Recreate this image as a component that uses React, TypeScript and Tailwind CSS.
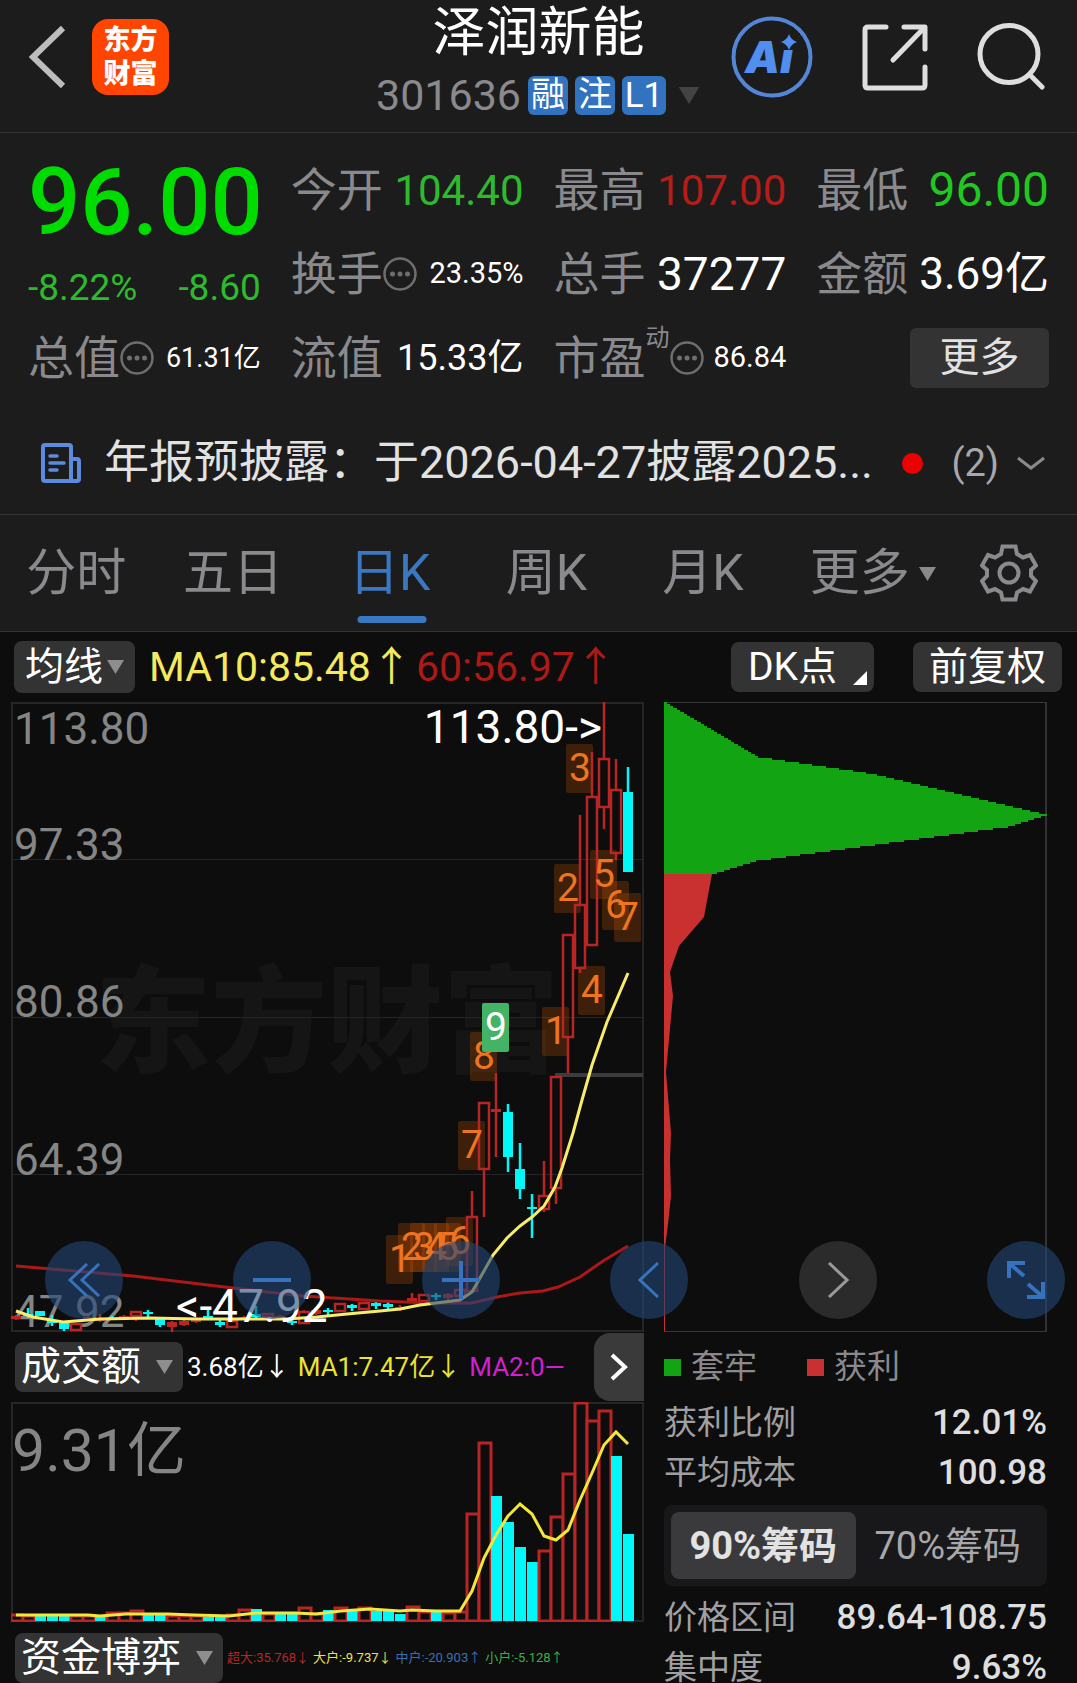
import React from "react";

const UP = "#b92525";
const DOWN = "#00f8f8";
const BG = "#0d0d0d";

const slotX = (i: number) => 16 + i * 12;

type Candle = { up: boolean; high: number; top: number; bottom: number; low: number; solid?: boolean };

const c = (up: boolean, high: number, top: number, bottom: number, low: number, solid = false): Candle => ({
  up,
  high,
  top,
  bottom,
  low,
  solid,
});

const candles: Candle[] = [
  c(true, 1315, 1316, 1319, 1320, true),
  c(false, 1308, 1314, 1316, 1318),
  c(false, 1311, 1311, 1316, 1316),
  c(false, 1315, 1320, 1323, 1326),
  c(false, 1322, 1323, 1329, 1331),
  c(true, 1323, 1324, 1330, 1331),
  c(true, 1316, 1317, 1321, 1321, true),
  c(true, 1314, 1319, 1321, 1322, true),
  c(false, 1316, 1318, 1320, 1320),
  c(true, 1315, 1316, 1318, 1319, true),
  c(true, 1311, 1312, 1316, 1321),
  c(false, 1310, 1312, 1314, 1317),
  c(false, 1317, 1317, 1325, 1327),
  c(true, 1321, 1322, 1327, 1332, true),
  c(true, 1320, 1321, 1325, 1326, true),
  c(true, 1319, 1320, 1322, 1323, true),
  c(false, 1309, 1316, 1318, 1319),
  c(false, 1320, 1322, 1325, 1327),
  c(true, 1320, 1321, 1327, 1328),
  c(true, 1316, 1317, 1319, 1320, true),
  c(false, 1306, 1314, 1317, 1318),
  c(true, 1313, 1314, 1317, 1319),
  c(true, 1315, 1316, 1319, 1320, true),
  c(false, 1319, 1321, 1323, 1325),
  c(true, 1310, 1312, 1323, 1324),
  c(true, 1308, 1310, 1314, 1315, true),
  c(false, 1308, 1310, 1312, 1316),
  c(true, 1303, 1304, 1311, 1312),
  c(false, 1304, 1305, 1308, 1311),
  c(true, 1302, 1303, 1309, 1310),
  c(false, 1302, 1303, 1306, 1309),
  c(false, 1302, 1304, 1307, 1309),
  c(true, 1305, 1307, 1310, 1311, true),
  c(true, 1293, 1298, 1301, 1302, true),
  c(true, 1294, 1295, 1301, 1302),
  c(false, 1293, 1295, 1297, 1300),
  c(true, 1293, 1294, 1298, 1300, true),
  c(true, 1288, 1290, 1296, 1297),
  c(true, 1191, 1217, 1291, 1292),
  c(true, 1102, 1103, 1169, 1217),
  c(true, 1073, 1109, 1112, 1157, true),
  c(false, 1104, 1112, 1157, 1172),
  c(false, 1143, 1169, 1189, 1199),
  c(false, 1194, 1207, 1209, 1238),
  c(true, 1161, 1196, 1209, 1212),
  c(true, 1077, 1077, 1188, 1204),
  c(true, 934, 935, 1037, 1073),
  c(true, 815, 905, 968, 973),
  c(true, 752, 797, 945, 946),
  c(true, 702, 759, 807, 829),
  c(true, 759, 790, 853, 860),
  c(false, 767, 792, 872, 872),
];

const signals: [string, number, number, boolean?][] = [
  ["1", 386, 1235],
  ["2", 398, 1223],
  ["3", 410, 1223],
  ["4", 422, 1223],
  ["5", 434, 1223],
  ["6", 446, 1217],
  ["7", 458, 1121],
  ["8", 470, 1032],
  ["9", 482, 1003, true],
  ["1", 542, 1007],
  ["2", 554, 864],
  ["3", 566, 744],
  ["4", 578, 966],
  ["5", 590, 850],
  ["6", 602, 881],
  ["7", 614, 893],
];

const volumes: [boolean, number][] = [
  [true, 1615], [true, 1616], [false, 1615], [false, 1616], [false, 1616], [true, 1616], [true, 1616],
  [false, 1615], [true, 1613], [true, 1613], [true, 1611], [false, 1614], [false, 1614], [true, 1616],
  [true, 1616], [true, 1616], [false, 1617], [false, 1616], [true, 1615], [true, 1610], [false, 1609],
  [true, 1614], [false, 1613], [false, 1613], [true, 1608], [true, 1614], [false, 1610], [true, 1608],
  [false, 1610], [true, 1608], [false, 1611], [false, 1611], [false, 1614], [true, 1607], [true, 1612],
  [false, 1612], [true, 1613], [true, 1612], [true, 1514], [true, 1443], [false, 1496], [false, 1522],
  [false, 1547], [false, 1562], [true, 1551], [true, 1517], [true, 1474], [true, 1403], [true, 1421],
  [true, 1411], [false, 1456], [false, 1534],
];

const trapped: [number, number][] = [
  [702, 1], [757, 94], [774, 209], [815, 383], [827, 344], [861, 92], [874, 50],
];

function trappedWidth(y: number) {
  for (let i = 1; i < trapped.length; i++) {
    const [y0, w0] = trapped[i - 1];
    const [y1, w1] = trapped[i];
    if (y <= y1) return Math.round(w0 + ((w1 - w0) * (y - y0)) / (y1 - y0));
  }
  return 50;
}

const trappedPath = (() => {
  let d = "M664 702";
  for (let y = 702; y < 874; y += 2) {
    d += `L${664 + trappedWidth(y + 1)} ${y}V${y + 2}`;
  }
  return d + "H664Z";
})();

function Triangle({ className = "" }: { className?: string }) {
  return (
    <svg viewBox="0 0 17 14" className={className} fill="currentColor" aria-hidden="true">
      <path d="M0 0H17L8.5 14Z" />
    </svg>
  );
}

function Dots() {
  return (
    <svg viewBox="0 0 34 34" className="h-[34px] w-[34px] shrink-0 text-[#6e6e70]" fill="currentColor" aria-hidden="true">
      <circle cx="17" cy="17" r="15.5" fill="none" stroke="currentColor" strokeWidth="2.5" />
      <circle cx="9.5" cy="17" r="2.5" />
      <circle cx="17" cy="17" r="2.5" />
      <circle cx="24.5" cy="17" r="2.5" />
    </svg>
  );
}

function Header() {
  return (
    <header className="grid h-[133px] grid-cols-[1fr_auto_1fr] border-b border-[#333]">
      <div className="flex items-start pt-[19px] pl-7">
        <button aria-label="返回" className="flex h-[76px] w-16 items-center">
          <svg viewBox="0 0 38 64" className="h-16 w-[38px]" fill="none" stroke="#bdbdbd" strokeWidth="6">
            <path d="M35 3L5 32L35 61" />
          </svg>
        </button>
        <a href="#" className="flex h-[76px] w-[77px] flex-col items-center justify-center rounded-2xl bg-[#ff4500] text-[27px] leading-[34px] font-black text-white">
          <span>东方</span>
          <span>财富</span>
        </a>
      </div>
      <div className="flex flex-col items-center">
        <h1 className="text-[53px] leading-[66px] text-white">泽润新能</h1>
        <button className="mt-[10px] flex h-[39px] items-center gap-[7px] text-white">
          <span className="text-[43px] leading-[39px] text-[#8a8a8e]">301636</span>
          <span className="h-[39px] w-10 rounded-md bg-[#3273c0] text-[34px] leading-[37px]">融</span>
          <span className="h-[39px] w-10 rounded-md bg-[#3273c0] text-[34px] leading-[37px]">注</span>
          <span className="h-[39px] w-11 rounded-md bg-[#3273c0] text-[35px] leading-[39px]">L1</span>
          <Triangle className="ml-1 h-[17px] w-6 text-[#434343]" />
        </button>
      </div>
      <div className="flex items-start justify-end gap-[49px] pt-4 pr-8">
        <button aria-label="Ai">
          <svg viewBox="0 0 82 82" className="h-[82px] w-[82px]">
            <circle cx="41" cy="41" r="38.5" fill="none" stroke="#5585d6" strokeWidth="4" />
            <text x="38" y="57" textAnchor="middle" fontFamily="Inter, sans-serif" fontWeight="900" fontStyle="italic" fontSize="44" fill="#528ef0">
              Ai
            </text>
            <rect x="49" y="17" width="20" height="17" fill="#1c1c1c" />
            <path d="M58 18Q60 24 66 26Q60 28 58 34Q56 28 50 26Q56 24 58 18Z" fill="#528ef0" />
          </svg>
        </button>
        <button aria-label="分享" className="mt-2">
          <svg viewBox="0 0 66 67" className="h-[67px] w-[66px]" fill="none" stroke="#dedede" strokeWidth="5" strokeLinecap="round" strokeLinejoin="round">
            <path d="M24 3H6Q3 3 3 6V61Q3 64 6 64H60Q63 64 63 61V43" />
            <path d="M42 3H63V25" />
            <path d="M62 4L31 36" />
          </svg>
        </button>
        <button aria-label="搜索" className="mt-[7px]">
          <svg viewBox="0 0 68 68" className="h-[68px] w-[68px]" fill="none" stroke="#dedede" strokeWidth="5" strokeLinecap="round">
            <ellipse cx="32" cy="31" rx="29" ry="28.5" />
            <path d="M53 52L65 64" />
          </svg>
        </button>
      </div>
    </header>
  );
}

function Stat({ label, sup, dots, children, className }: { label: string; sup?: string; dots?: boolean; children: React.ReactNode; className: string }) {
  return (
    <div className="flex h-[60px] items-center justify-between whitespace-nowrap">
      <span className="flex items-center text-[46px] leading-[64px] text-[#8a8a8e]">
        {label}
        {sup && <sup className="-top-5 text-2xl leading-6">{sup}</sup>}
        {dots && <Dots />}
      </span>
      <span className={className}>{children}</span>
    </div>
  );
}

function Quote() {
  return (
    <section className="grid grid-cols-4 gap-x-[30px] gap-y-6 px-7 pt-[27px] pb-6">
      <div className="row-span-2 flex flex-col justify-between">
        <div className="text-[92px] leading-[86px] font-medium text-[#00db00]">96.00</div>
        <div className="flex justify-between text-[37px] leading-8 text-[#2dbb2d]">
          <span>-8.22%</span>
          <span>-8.60</span>
        </div>
      </div>
      <Stat label="今开" className="text-[42px] text-[#2dbb2d]">104.40</Stat>
      <Stat label="最高" className="text-[42px] text-[#b81c18]">107.00</Stat>
      <Stat label="最低" className="text-[48px] text-[#20c820]">96.00</Stat>
      <Stat label="换手" dots className="text-[29px] text-white">23.35%</Stat>
      <Stat label="总手" className="text-[46px] text-white">37277</Stat>
      <Stat label="金额" className="text-[44px] text-white">3.69亿</Stat>
      <Stat label="总值" dots className="text-[27px] text-white">61.31亿</Stat>
      <Stat label="流值" className="text-[36px] text-white">15.33亿</Stat>
      <Stat label="市盈" sup="动" dots className="text-[29px] text-white">86.84</Stat>
      <div className="flex justify-end">
        <button className="h-[60px] w-[139px] rounded-md bg-[#333] text-[40px] leading-[58px] text-[#e2e2e2]">更多</button>
      </div>
    </section>
  );
}

function News() {
  return (
    <a href="#" className="flex h-[103px] items-center border-b border-[#333] pr-8 pl-10">
      <svg viewBox="0 0 42 42" className="h-[42px] w-[42px] shrink-0" fill="none" stroke="#5b8ade" strokeWidth="4" strokeLinejoin="round" strokeLinecap="round">
        <path d="M32 39H5Q3 39 3 37V5Q3 3 5 3H29Q31 3 31 5V39" />
        <path d="M31 17H37Q39 17 39 19V37Q39 39 37 39H31" />
        <path d="M10 14H17M10 21H24M10 28H17" strokeWidth="3.5" />
      </svg>
      <span className="ml-[22px] min-w-0 flex-1 overflow-hidden text-[45px] leading-[60px] text-ellipsis whitespace-nowrap text-[#e2e2e2]">
        年报预披露：于2026-04-27披露2025...
      </span>
      <span className="mr-7 ml-4 h-[21px] w-[21px] rounded-full bg-[#ee0000]" />
      <span className="text-[38px] leading-[60px] text-[#a8a8aa]">(2)</span>
      <svg viewBox="0 0 28 14" className="ml-[18px] h-[14px] w-7" fill="none" stroke="#8a8a8e" strokeWidth="3">
        <path d="M1 2L14 12L27 2" />
      </svg>
    </a>
  );
}

const tabs = ["分时", "五日", "日K", "周K", "月K", "更多"];

function Tabs() {
  return (
    <nav className="flex h-[117px] border-b border-[#333] text-[50px] leading-[60px] text-[#8a8a8e]">
      {tabs.map((t) => (
        <button key={t} className={t === "日K" ? "relative flex-1 pr-1 text-[#3b78c2]" : "relative flex-1 pr-1"}>
          {t}
          {t === "日K" && <span className="absolute bottom-2 left-1/2 h-[7px] w-[69px] -translate-x-1/2 rounded-full bg-[#3b78c2]" />}
          {t === "更多" && <Triangle className="absolute top-[52px] right-1 h-[14px] w-[17px]" />}
        </button>
      ))}
      <button aria-label="设置" className="flex w-[137px] items-center justify-center">
        <svg viewBox="0 0 58 58" className="h-[58px] w-[58px]" fill="none" stroke="#8a8a8e" strokeWidth="4">
          <path d="M22.5 2.5H35.5L37 10L43 13.5L50 11L56 21.5L51 26V32L56 37L50 47.5L43 45L37 48.5L35.5 55.5H22.5L21 48.5L15 45L8 47.5L2 37L7 32V26L2 21.5L8 11L15 13.5L21 10Z" />
          <circle cx="29" cy="29" r="9.5" />
        </svg>
      </button>
    </nav>
  );
}

function Toolbar() {
  return (
    <div className="flex h-[70px] items-center pr-[15px] pl-[14px] text-[39px] leading-[50px] text-white">
      <button className="flex h-[52px] w-[121px] items-center justify-center gap-1 rounded-lg bg-[#333]">
        均线
        <Triangle className="h-[14px] w-[17px] text-[#8e8e8e]" />
      </button>
      <span className="ml-[14px] text-[41px] text-[#f5ea5e]">MA10:85.48↑</span>
      <span className="ml-1 flex-1 text-[41px] text-[#ab1a17]">60:56.97↑</span>
      <button className="relative h-[50px] w-[143px] rounded-lg bg-[#333] pr-5 leading-[48px]">
        DK点
        <svg viewBox="0 0 14 14" className="absolute right-[7px] bottom-[7px] h-[14px] w-[14px]" fill="#fff">
          <path d="M14 0V14H0Z" />
        </svg>
      </button>
      <button className="ml-[39px] h-[50px] w-[149px] rounded-lg bg-[#333] leading-[48px]">前复权</button>
    </div>
  );
}

function PriceChart() {
  return (
    <svg viewBox="11 702 633 630" className="block w-full">
      <rect x="12" y="703" width="631" height="628" fill={BG} stroke="#262626" strokeWidth="2" />
      <text x="95" y="1063" fontSize="116" fontWeight="900" fill="#151515">东方财富</text>
      {[859.5, 1017.5, 1174.5].map((y) => (
        <path key={y} d={`M12 ${y}H643`} stroke="#242424" />
      ))}
      {[["113.80", 744], ["97.33", 860], ["80.86", 1017], ["64.39", 1175], ["47.92", 1327]].map(([t, y]) => (
        <text key={t} x="14" y={y} fontSize="44" fill="#858585">{t}</text>
      ))}
      <path d="M555 1075H643" stroke="#3c3c3c" strokeWidth="4" />
      {signals
        .filter(([, , , done]) => !done)
        .map(([t, x, y]) => (
          <rect key={t + x} x={x} y={y} width="27" height="49" rx="2" fill="#ff6a00" fillOpacity="0.2" />
        ))}
      {candles.map((k, i) => {
        const x = slotX(i);
        const color = k.up ? UP : DOWN;
        const hollow = k.up && !k.solid;
        return (
          <g key={i} stroke={color} strokeWidth="2.5">
            <path d={`M${x} ${k.high}V${k.top}M${x} ${k.bottom}V${k.low}`} />
            {hollow ? (
              <rect x={x - 5} y={k.top} width="10" height={k.bottom - k.top} fill="none" />
            ) : (
              <rect x={x - 5} y={k.top} width="10" height={k.bottom - k.top} fill={color} stroke="none" />
            )}
          </g>
        );
      })}
      <polyline
        points="16,1266 133,1276 233,1288 303,1296 380,1301 430,1303 472,1303 497,1297 520,1293 543,1291 558,1287 580,1277 603,1261 628,1246"
        fill="none"
        stroke="#ab1818"
        strokeWidth="3"
      />
      <polyline
        points="16,1311 33,1317 63,1322 100,1319 150,1318 197,1319 247,1319 287,1319 317,1317 347,1314 380,1311 400,1309 420,1305 460,1300 472,1292 480,1278 493,1255 507,1238 520,1226 532,1217 544,1206 555,1187 562,1168 573,1133 582,1100 592,1065 607,1022 628,973"
        fill="none"
        stroke="#f7ec6c"
        strokeWidth="3"
      />
      {signals.map(([t, x, y, done]) => (
        <g key={x}>
          {done && <rect x={x} y={y} width="27" height="49" rx="2" fill="#43b365" />}
          <text x={x + 14} y={y + 37} textAnchor="middle" fontSize="39" fill={done ? "#fff" : "#ee7420"}>{t}</text>
        </g>
      ))}
      <text x="602" y="743" textAnchor="end" fontSize="46" fill="#fff">113.80-&gt;</text>
      <text x="176" y="1322" fontSize="46" fill="#fff">&lt;-47.92</text>
    </svg>
  );
}

function ChipChart() {
  return (
    <svg viewBox="664 702 383 630" className="block w-full">
      <rect x="664.5" y="702.5" width="382" height="629" fill="none" stroke="#383838" />
      <path d="M1046 702V1332" stroke="#333" strokeWidth="2" />
      <path d={trappedPath} fill="#13a413" />
      <path
        d="M664 874H712L704 917L679 946L670 972L673 996L666 1072L671 1133L670 1160L671 1196L668 1224L665 1248V1331H664Z"
        fill="#c93030"
      />
    </svg>
  );
}

function VolumeChart() {
  return (
    <svg viewBox="11 1402 633 220" className="block w-full">
      <rect x="12" y="1403" width="631" height="218" fill="none" stroke="#262626" strokeWidth="2" />
      <text x="12" y="1471" fontSize="59" fill="#858585">9.31亿</text>
      {volumes.map(([up, y], i) =>
        up ? (
          <rect key={i} x={slotX(i) - 5} y={y} width="12" height={1621 - y} fill={BG} stroke={UP} strokeWidth="3" />
        ) : (
          <rect key={i} x={slotX(i) - 5} y={y} width="11" height={1621 - y} fill={DOWN} />
        ),
      )}
      <polyline
        points="16,1615 88,1615 100,1616 126,1614 168,1614 194,1615 229,1616 257,1613 295,1613 316,1614 341,1611 370,1609 400,1611 412,1610 436,1611 460,1611 472,1591 484,1558 496,1535 508,1516 520,1504 532,1514 544,1536 556,1540 568,1530 580,1500 592,1473 604,1445 616,1432 628,1444"
        fill="none"
        stroke="#f5e63c"
        strokeWidth="3"
      />
    </svg>
  );
}

const roundBlue = "flex h-[78px] w-[78px] items-center justify-center rounded-full bg-[#224676]/60";

function ChartControls() {
  return (
    <div className="absolute right-3 bottom-[13px] left-[45px] flex justify-between">
      <button aria-label="最早" className={roundBlue}>
        <svg viewBox="0 0 34 34" className="h-[34px] w-[34px]" fill="none" stroke="#3672bd" strokeWidth="3"><path d="M20 1L3 17L20 33M32 1L15 17L32 33" /></svg>
      </button>
      <button aria-label="缩小" className={roundBlue}>
        <svg viewBox="0 0 38 38" className="h-[38px] w-[38px]" stroke="#3672bd" strokeWidth="4"><path d="M0 19H38" /></svg>
      </button>
      <button aria-label="放大" className={roundBlue}>
        <svg viewBox="0 0 38 38" className="h-[38px] w-[38px]" stroke="#3672bd" strokeWidth="4"><path d="M0 19H38M19 0V38" /></svg>
      </button>
      <button aria-label="左移" className={roundBlue}>
        <svg viewBox="0 0 22 36" className="h-9 w-[22px]" fill="none" stroke="#3672bd" strokeWidth="3"><path d="M20 1L2 18L20 35" /></svg>
      </button>
      <button aria-label="右移" className="flex h-[78px] w-[78px] items-center justify-center rounded-full bg-[#2b2b2b]">
        <svg viewBox="0 0 22 36" className="h-9 w-[22px]" fill="none" stroke="#9a9a9a" strokeWidth="3"><path d="M2 1L20 18L2 35" /></svg>
      </button>
      <button aria-label="全屏" className={roundBlue}>
        <svg viewBox="0 0 40 40" className="h-10 w-10" fill="none" stroke="#3672bd" strokeWidth="4">
          <path d="M19 3H3V18M3 3L18 16" />
          <path d="M21 37H37V22M37 37L22 24" />
        </svg>
      </button>
    </div>
  );
}

function Row({ label, value }: { label: string; value: string }) {
  return (
    <div className="flex h-[50px] items-center justify-between text-[33px] leading-[50px]">
      <dt className="text-[#a0a0a2]">{label}</dt>
      <dd className="text-[35px] font-medium text-[#dedede]">{value}</dd>
    </div>
  );
}

function ChipPanel() {
  return (
    <aside>
      <div className="flex h-[66px] items-center gap-[50px] pt-1 text-[33px] text-[#8a8a8e]">
        <span className="flex items-center gap-[10px]"><i className="h-[17px] w-[17px] bg-[#13a413]" />套牢</span>
        <span className="flex items-center gap-[10px]"><i className="h-[17px] w-[17px] bg-[#c93030]" />获利</span>
      </div>
      <dl>
        <Row label="获利比例" value="12.01%" />
        <Row label="平均成本" value="100.98" />
      </dl>
      <div className="my-[7px] flex h-[81px] rounded-lg bg-[#18181a] p-[7px] text-[38px] text-[#a8a8aa]">
        <button className="flex-1 rounded-lg bg-[#3a3a3c] leading-[64px] font-bold text-[#e2e2e2]">90%筹码</button>
        <button className="flex-1 leading-[64px]">70%筹码</button>
      </div>
      <dl>
        <Row label="价格区间" value="89.64-108.75" />
        <Row label="集中度" value="9.63%" />
      </dl>
    </aside>
  );
}

function IndicatorPanel() {
  return (
    <section>
      <div className="flex h-[70px] items-center whitespace-nowrap">
        <button className="ml-1 flex h-[50px] w-[168px] items-center justify-between rounded-lg bg-[#333] pr-[10px] pl-[6px] text-[40px] leading-[48px] text-white">
          成交额
          <Triangle className="h-[14px] w-[17px] text-[#8e8e8e]" />
        </button>
        <div className="flex flex-1 gap-2 pl-1 text-[26px]">
          <span className="text-white">3.68亿↓</span>
          <span className="text-[#ece32e]">MA1:7.47亿↓</span>
          <span className="text-[#d21fd2]">MA2:0—</span>
        </div>
        <button aria-label="下一个" className="flex h-[68px] w-[50px] items-center justify-center rounded-l-2xl bg-[#3a3a3a]">
          <svg viewBox="0 0 18 28" className="h-7 w-[18px]" fill="none" stroke="#fff" strokeWidth="4"><path d="M2 2L15 14L2 26" /></svg>
        </button>
      </div>
      <VolumeChart />
      <div className="mt-[11px] flex h-[50px] items-center whitespace-nowrap">
        <button className="ml-1 flex h-[50px] w-[208px] items-center justify-between rounded-lg bg-[#333] pr-[10px] pl-[6px] text-[40px] leading-[48px] text-white">
          资金博弈
          <Triangle className="h-[14px] w-[17px] text-[#8e8e8e]" />
        </button>
        <div className="flex gap-1 pl-1 text-[13px]">
          <span className="text-[#b02a2a]">超大:35.768↓</span>
          <span className="text-[#f0e050]">大户:-9.737↓</span>
          <span className="text-[#3d6fb0]">中户:-20.903↑</span>
          <span className="text-[#3fae46]">小户:-5.128↑</span>
        </div>
      </div>
    </section>
  );
}

export default function App() {
  return (
    <main className="min-h-screen bg-[#0d0d0d] font-['Roboto','Noto_Sans_CJK_SC',sans-serif]">
      <div className="bg-[#1c1c1c]">
        <Header />
        <Quote />
        <News />
        <Tabs />
      </div>
      <Toolbar />
      <div className="relative grid grid-cols-[633fr_383fr] gap-x-5 pr-[30px] pl-[11px]">
        <PriceChart />
        <ChipChart />
        <ChartControls />
      </div>
      <div className="grid grid-cols-[633fr_383fr] gap-x-5 pr-[30px] pl-[11px]">
        <IndicatorPanel />
        <ChipPanel />
      </div>
    </main>
  );
}
